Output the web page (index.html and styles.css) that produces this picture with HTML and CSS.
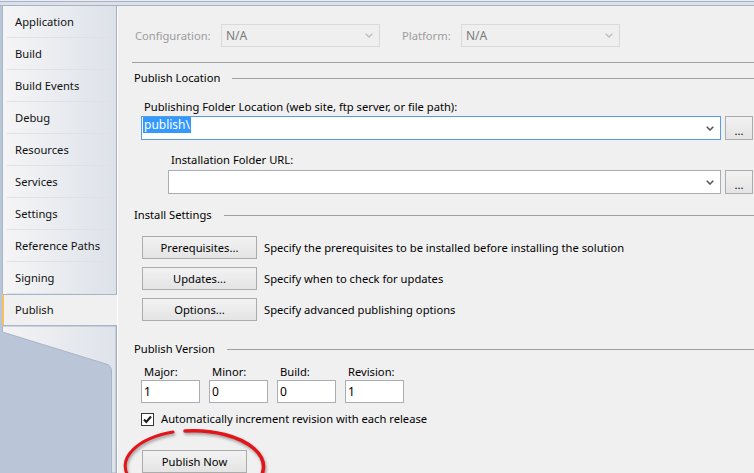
FILE: index.html
```html
<!DOCTYPE html>
<html>
<head>
<meta charset="utf-8">
<link rel="stylesheet" href="styles.css">
</head>
<body>
<div class="window">
  <div class="topstrip"></div>
  <div class="main">
    <nav class="sidebar">
      <div class="tab">Application</div>
      <div class="tab">Build</div>
      <div class="tab">Build Events</div>
      <div class="tab">Debug</div>
      <div class="tab">Resources</div>
      <div class="tab">Services</div>
      <div class="tab">Settings</div>
      <div class="tab">Reference Paths</div>
      <div class="tab">Signing</div>
      <div class="tab selected">Publish</div>
      <div class="tail">
        <svg width="114" height="147" viewBox="0 0 114 147">
          <defs>
            <linearGradient id="tailg" x1="0" x2="1" y1="0" y2="0">
              <stop offset="0" stop-color="#f3f3f4"/>
              <stop offset="1" stop-color="#dfe3ea"/>
            </linearGradient>
          </defs>
          <path d="M0.5 0 H114 V147 H109.5 V45 Q109.5 39.5 104 38 L0.5 6 Z" fill="url(#tailg)" stroke="#a9b5c8" stroke-width="1"/>
        </svg>
      </div>
    </nav>

    <section class="content">
      <div class="configrow">
        <span class="dimlabel cfg-label">Configuration:</span>
        <div class="combo disabled">
          <span class="combo-text">N/A</span>
          <svg class="chev" width="8" height="5" viewBox="0 0 8 5"><path d="M0.7 0.7 L4 4 L7.3 0.7" fill="none" stroke="#c2c2c2" stroke-width="1.6"/></svg>
        </div>
        <span class="dimlabel plat-label">Platform:</span>
        <div class="combo disabled">
          <span class="combo-text">N/A</span>
          <svg class="chev" width="8" height="5" viewBox="0 0 8 5"><path d="M0.7 0.7 L4 4 L7.3 0.7" fill="none" stroke="#c2c2c2" stroke-width="1.6"/></svg>
        </div>
      </div>

      <div class="sep"></div>

      <div class="grouphead loc-head"><span>Publish Location</span><span class="rule"></span></div>
      <div class="fieldlabel folder-label">Publishing Folder Location (web site, ftp server, or file path):</div>
      <div class="comborow folder-row">
        <div class="combo focused wide1">
          <span class="selected-text">publish\</span>
          <svg class="chev" width="8" height="5" viewBox="0 0 8 5"><path d="M0.7 0.7 L4 4 L7.3 0.7" fill="none" stroke="#5a5a5a" stroke-width="1.6"/></svg>
        </div>
        <div class="btn browse">...</div>
      </div>

      <div class="fieldlabel install-label">Installation Folder URL:</div>
      <div class="comborow url-row">
        <div class="combo wide2">
          <svg class="chev" width="8" height="5" viewBox="0 0 8 5"><path d="M0.7 0.7 L4 4 L7.3 0.7" fill="none" stroke="#5a5a5a" stroke-width="1.6"/></svg>
        </div>
        <div class="btn browse">...</div>
      </div>

      <div class="grouphead settings-head"><span>Install Settings</span><span class="rule"></span></div>
      <div class="actions">
        <div class="actionrow"><div class="btn action">Prerequisites...</div><span class="desc">Specify the prerequisites to be installed before installing the solution</span></div>
        <div class="actionrow"><div class="btn action">Updates...</div><span class="desc">Specify when to check for updates</span></div>
        <div class="actionrow"><div class="btn action">Options...</div><span class="desc">Specify advanced publishing options</span></div>
      </div>

      <div class="grouphead version-head"><span>Publish Version</span><span class="rule"></span></div>
      <div class="versionrow">
        <div class="vcol"><span class="vlabel">Major:</span><div class="vinput">1</div></div>
        <div class="vcol"><span class="vlabel">Minor:</span><div class="vinput">0</div></div>
        <div class="vcol"><span class="vlabel">Build:</span><div class="vinput">0</div></div>
        <div class="vcol"><span class="vlabel">Revision:</span><div class="vinput">1</div></div>
      </div>

      <div class="checkrow">
        <span class="checkbox">
          <svg width="11" height="11" viewBox="0 0 11 11"><path d="M2 5.5 L4.3 8 L9 2.5" fill="none" stroke="#1a1a1a" stroke-width="2"/></svg>
        </span>
        <span>Automatically increment revision with each release</span>
      </div>

      <div class="publish-wrap">
        <div class="btn publish-now">Publish Now</div>
        <svg class="circle-mark" width="170" height="60" viewBox="0 0 170 60">
          <path d="M75 11 A70 36 0 0 1 140 68" fill="none" stroke="#e2151b" stroke-width="3.6" stroke-linecap="round"/>
          <path d="M63 12 A70 36 0 0 0 18 56" fill="none" stroke="#e2151b" stroke-width="3" stroke-linecap="round"/>
        </svg>
      </div>
    </section>
  </div>
</div>
</body>
</html>
```

FILE: styles.css
```css
html, body {
  margin: 0;
  padding: 0;
}
body {
  width: 754px;
  height: 473px;
  overflow: hidden;
  background: #f0f0f0;
  font-family: "Segoe UI", "Noto Sans", "Open Sans", sans-serif;
  font-size: 11.2px;
  color: #000;
}
.window {
  width: 754px;
  height: 473px;
  display: flex;
  flex-direction: column;
}
.topstrip {
  height: 6px;
  flex: none;
  background: linear-gradient(to bottom, #e9ecf1 0 1px, #a8b4c6 1px 2px, #dce1e9 2px 5px, #a8b4c6 5px 6px);
}
.main {
  flex: 1;
  display: flex;
  min-height: 0;
}

/* sidebar */
.sidebar {
  width: 114px;
  flex: none;
  padding-left: 2px;
  background: #bac6d7;
  border-right: 1px solid #a3b0c3;
  display: flex;
  flex-direction: column;
}
.tab {
  height: 32px;
  flex: none;
  box-sizing: border-box;
  border-left: 1px solid #a9b5c8;
  padding-left: 12px;
  padding-bottom: 1px;
  line-height: 31px;
  color: #111;
  background:
    linear-gradient(#dde1e8, #dde1e8) no-repeat 4px 100% / 104px 1px,
    linear-gradient(to right, #f5f5f6, #dde2e9);
}
.tab.selected {
  background: #f0f0f0;
  border-top: 1px solid #a9b5c8;
  border-bottom: 1px solid #a9b5c8;
  border-left: 2px solid #f3c062;
  padding-left: 11px;
  padding-bottom: 0;
  line-height: 30px;
  margin-right: -1px;
}
.tail {
  flex: 1;
  min-height: 0;
  overflow: hidden;
}
.tail svg {
  display: block;
}

/* content */
.content {
  flex: 1;
  display: flex;
  flex-direction: column;
  align-items: flex-start;
  min-width: 0;
  box-shadow: inset 1px 0 0 #ffffff;
}
.configrow {
  display: flex;
  align-items: center;
  margin: 18px 0 0 18px;
  height: 23px;
}
.dimlabel {
  color: #9c9c9c;
}
.cfg-label { width: 86px; }
.plat-label { width: 59px; margin-left: 22px; }
.combo {
  box-sizing: border-box;
  height: 23px;
  border: 1px solid #abadb3;
  background: #fff;
  display: flex;
  align-items: center;
  position: relative;
}
.combo.disabled {
  width: 159px;
  background: #efefef;
  border-color: #d9d9d9;
}
.combo-text {
  padding-left: 4px;
  color: #7a7a7a;
  flex: 1;
  font-size: 12px;
}
.chev {
  margin-left: auto;
  margin-right: 6px;
  flex: none;
}
.sep {
  align-self: stretch;
  height: 1px;
  background: #a0a0a0;
  margin: 15px 0 0 15px;
}
.grouphead {
  align-self: stretch;
  display: flex;
  align-items: center;
  height: 16px;
  line-height: 16px;
  margin-left: 17px;
}
.grouphead .rule {
  flex: 1;
  height: 1px;
  background: #a0a0a0;
  margin-left: 12px;
}
.loc-head { margin-top: 7px; }
.fieldlabel {
  line-height: 16px;
}
.folder-label { margin: 13px 0 0 27px; }
.comborow {
  display: flex;
  gap: 4px;
}
.folder-row { margin: 1px 0 0 24px; }
.combo.wide1 {
  width: 580px;
  height: 24px;
  border-color: #569de5;
  align-items: flex-start;
}
.combo.wide1 .chev {
  align-self: center;
}
.selected-text {
  margin-left: 1px;
  background: #3399ff;
  color: #fff;
  line-height: 16px;
  padding: 0 1px;
  font-size: 12px;
}
.install-label { margin: 12px 0 0 54px; }
.url-row { margin: 2px 0 0 51px; }
.combo.wide2 {
  width: 553px;
  height: 24px;
}
.btn {
  box-sizing: border-box;
  border: 1px solid #acacac;
  background: linear-gradient(#f2f2f2, #e4e4e4);
  display: flex;
  align-items: center;
  justify-content: center;
  height: 23px;
}
.browse {
  width: 28px;
  height: 24px;
  padding-top: 4px;
}
.settings-head { margin-top: 13px; }
.actions {
  display: flex;
  flex-direction: column;
  gap: 8px;
  margin: 13px 0 0 25px;
}
.actionrow {
  display: flex;
  align-items: center;
}
.action {
  width: 115px;
}
.desc {
  margin-left: 7px;
}
.version-head { margin-top: 20px; }
.versionrow {
  display: flex;
  gap: 9px;
  margin: 7px 0 0 24px;
}
.vcol {
  display: flex;
  flex-direction: column;
  width: 59px;
}
.vlabel {
  line-height: 16px;
  padding-left: 3px;
}
.vinput {
  box-sizing: border-box;
  height: 23px;
  border: 1px solid #abadb3;
  background: #fff;
  padding-left: 2px;
  line-height: 21px;
  font-size: 12px;
}
.checkrow {
  display: flex;
  align-items: center;
  gap: 7px;
  margin: 8px 0 0 24px;
  line-height: 16px;
}
.checkbox {
  box-sizing: border-box;
  width: 13px;
  height: 13px;
  border: 1px solid #333;
  background: #fff;
  display: flex;
  align-items: center;
  justify-content: center;
}
.checkbox svg { display: block; }
.publish-wrap {
  position: relative;
  margin: 23px 0 0 25px;
}
.publish-now {
  width: 105px;
}
.circle-mark {
  position: absolute;
  left: -32px;
  top: -30px;
  overflow: visible;
  pointer-events: none;
  filter: drop-shadow(1px 2px 1.5px rgba(0, 0, 0, 0.35));
}
```
